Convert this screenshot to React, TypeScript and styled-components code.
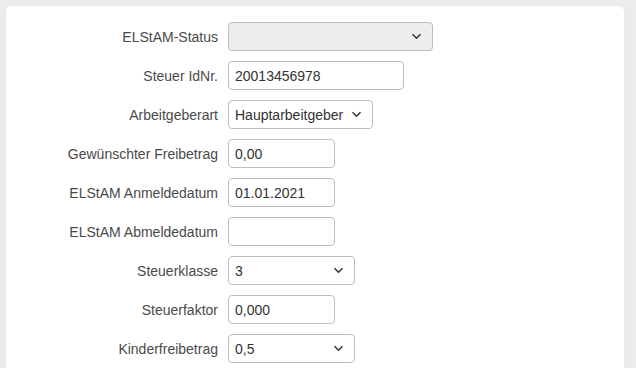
import { Fragment } from 'react';
import styled, { createGlobalStyle } from 'styled-components';

const GlobalStyle = createGlobalStyle`
  html, body {
    margin: 0;
    padding: 0;
    background: #ececec;
    font-family: "Liberation Sans", Arial, sans-serif;
  }
`;

const Page = styled.div`
  padding: 6px 12px 0 6px;
  height: 368px;
  box-sizing: border-box;
  overflow: hidden;
`;

const Card = styled.div`
  background: #fff;
  border-radius: 5px;
  box-shadow: 0 0 1px rgba(0, 0, 0, 0.12);
  padding: 16px 0 40px 0;
  display: grid;
  grid-template-columns: 212px 1fr;
  column-gap: 10px;
  row-gap: 10px;
  align-items: center;
`;

const Label = styled.label`
  text-align: right;
  font-size: 14px;
  color: #4a4a4a;
`;

const Field = styled.div<{ $w: number; $disabled?: boolean }>`
  width: ${({ $w }) => $w}px;
  height: 29px;
  box-sizing: border-box;
  border: 1px solid #bdbdbd;
  border-radius: 4px;
  background: ${({ $disabled }) => ($disabled ? '#eeeeee' : '#fff')};
  display: flex;
  align-items: center;
  justify-content: space-between;
  padding: 0 10px 0 6px;
  font-size: 14px;
  color: #333;
`;

const Chevron = () => (
  <svg width="11" height="7" viewBox="0 0 11 7">
    <path d="M1.5 1.2 L5.5 5.2 L9.5 1.2" fill="none" stroke="#333" strokeWidth="1.5" />
  </svg>
);

type Row = { label: string; value: string; w: number; select?: boolean; disabled?: boolean };

const rows: Row[] = [
  { label: 'ELStAM-Status', value: '', w: 205, select: true, disabled: true },
  { label: 'Steuer IdNr.', value: '20013456978', w: 176 },
  { label: 'Arbeitgeberart', value: 'Hauptarbeitgeber', w: 145, select: true },
  { label: 'Gewünschter Freibetrag', value: '0,00', w: 107 },
  { label: 'ELStAM Anmeldedatum', value: '01.01.2021', w: 107 },
  { label: 'ELStAM Abmeldedatum', value: '', w: 107 },
  { label: 'Steuerklasse', value: '3', w: 127, select: true },
  { label: 'Steuerfaktor', value: '0,000', w: 107 },
  { label: 'Kinderfreibetrag', value: '0,5', w: 127, select: true },
];

const App = () => (
  <>
    <GlobalStyle />
    <Page>
      <Card>
        {rows.map((r) => (
          <Fragment key={r.label}>
            <Label>{r.label}</Label>
            <Field $w={r.w} $disabled={r.disabled}>
              <span>{r.value}</span>
              {r.select && <Chevron />}
            </Field>
          </Fragment>
        ))}
      </Card>
    </Page>
  </>
);

export default App;
